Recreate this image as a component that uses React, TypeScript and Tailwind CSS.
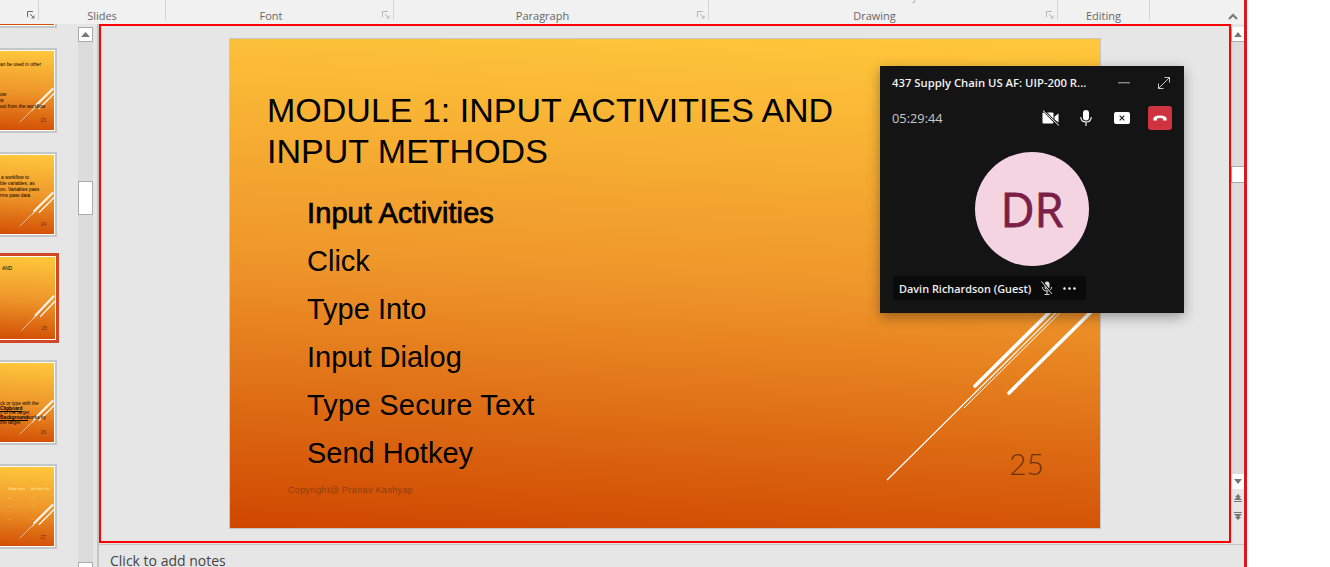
import React from "react";

const sans = "font-['Liberation_Sans',Arial,sans-serif]";
const ui = "font-['Open_Sans','Noto_Sans',sans-serif]";
const slideBg = "bg-[linear-gradient(183deg,#ffc83b_0%,#ee952a_50%,#cf4700_100%)]";

function Launcher({ dark }: { dark?: boolean }) {
  const c = dark ? "#6a6a6a" : "#b4b4b4";
  return (
    <svg width="8" height="8" viewBox="0 0 8 8" className="shrink-0">
      <path d="M0.5 6V0.5H6" fill="none" stroke={c} />
      <path d="M3 3L7 7M7 4.5V7H4.5" fill="none" stroke={c} />
    </svg>
  );
}

function RibbonGroup({ w, label, launcher }: { w: string; label: string; launcher?: boolean }) {
  return (
    <div className={`${w} h-[20px] shrink-0 relative flex items-end justify-center border-r border-[#d4d4d4] ${launcher ? "pr-[17px]" : ""}`}>
      <span className="text-[11px] leading-[13px] -mb-[2px] text-[#666]">{label}</span>
      {launcher ? (
        <span className="absolute right-[3px] bottom-[1px] flex">
          <Launcher />
        </span>
      ) : null}
    </div>
  );
}

function Ribbon() {
  return (
    <div className={`h-[24px] shrink-0 bg-[#f1f1f1] flex relative overflow-hidden ${ui}`}>
      <div className="w-[39px] h-[20px] shrink-0 relative border-r border-[#d4d4d4]">
        <span className="absolute right-[3px] bottom-[1px] flex">
          <Launcher dark />
        </span>
      </div>
      <div className="w-[127px] h-[20px] shrink-0 relative flex items-end justify-center border-r border-[#d4d4d4]">
        <span className="absolute -top-[12px] left-[8px] text-[12px] leading-[16px] text-[#333]">Slide</span>
        <span className="text-[11px] leading-[13px] -mb-[2px] text-[#666]">Slides</span>
      </div>
      <RibbonGroup w="w-[228px]" label="Font" launcher />
      <RibbonGroup w="w-[315px]" label="Paragraph" launcher />
      <div className="w-[349px] h-[20px] shrink-0 relative flex items-end justify-center border-r border-[#d4d4d4] pr-[17px]">
        <span className="absolute -top-[11px] left-[193px] text-[11px] leading-[14px] text-[#aaa]">Styles</span>
        <span className="text-[11px] leading-[13px] -mb-[2px] text-[#666]">Drawing</span>
        <span className="absolute right-[3px] bottom-[1px] flex">
          <Launcher />
        </span>
      </div>
      <RibbonGroup w="w-[92px]" label="Editing" />
      <div className="flex-1 flex justify-end items-start pr-[6px] pt-[13px]">
        <svg width="10" height="7" viewBox="0 0 10 7">
          <path d="M1 6L5 2L9 6" fill="none" stroke="#777" strokeWidth="2" />
        </svg>
      </div>
    </div>
  );
}

function Lines({ thin }: { thin?: boolean }) {
  // Drawn in the coordinates of the full slide (870 x 489).
  return (
    <svg className="absolute inset-0 w-full h-full" viewBox="0 0 870 489" preserveAspectRatio="none">
      <path d="M657 441L860 240" stroke="#fff" strokeWidth={thin ? 3.5 : 1.2} fill="none" />
      <path d="M745 347L860 233" stroke="#fff" strokeWidth={thin ? 9 : 3.6} fill="none" strokeLinecap="round" />
      <path d="M734 369L870 234" stroke="#fff" strokeWidth={thin ? 4 : 1} fill="none" />
      <path d="M779 354L870 264" stroke="#fff" strokeWidth={thin ? 8 : 3.6} fill="none" strokeLinecap="round" />
    </svg>
  );
}

type Row = { t: string; c: string };

function Thumb({ h, rows, num, selected, numTop }: { h: string; rows: Row[]; num: string; selected?: boolean; numTop: string }) {
  return (
    <div
      className={
        selected
          ? `w-[146px] ${h} shrink-0 border-[3px] border-[#d24726] p-px bg-white -mr-[2px]`
          : `w-[146px] ${h} shrink-0 border-2 border-[#c6c6c6] p-px bg-white`
      }
    >
      <div className={`relative w-full h-full overflow-hidden ${slideBg} ${sans}`}>
        <Lines thin />
        {rows.map((r) => (
          <div key={r.t + r.c} className={`absolute whitespace-nowrap leading-[6px] ${r.c}`}>
            {r.t}
          </div>
        ))}
        <div className={`absolute right-[8px] text-[5px] leading-[6px] text-[#6b3408] ${numTop}`}>{num}</div>
      </div>
    </div>
  );
}

function Scrollbar({ thumbTop, thumbH }: { thumbTop: string; thumbH: string }) {
  return (
    <div className="w-full h-full bg-[#dcdcdc] flex flex-col">
      <button className="h-[15px] w-full shrink-0 bg-white border border-[#ababab] flex items-center justify-center">
        <svg width="9" height="5" viewBox="0 0 9 5">
          <path d="M4.5 0L9 5H0Z" fill="#777" />
        </svg>
      </button>
      <div className={`${thumbTop} ${thumbH} w-full shrink-0 bg-white border border-[#ababab]`} />
    </div>
  );
}

function ThumbPanel() {
  return (
    <div className="w-[99px] shrink-0 h-full flex border-r-2 border-[#c6c6c6] bg-[#e6e6e6]">
      <div className="w-[78px] shrink-0 h-full overflow-hidden flex flex-col items-end pr-[21px]">
        <div className="-mt-[81px] mb-[20px] w-[146px] h-[85px] shrink-0 border-2 border-[#c6c6c6] p-px bg-white">
          <div className={`w-full h-full ${slideBg}`} />
        </div>
        <Thumb
          h="h-[85px]"
          num="23"
          numTop="top-[66px]"
          rows={[
            { t: "an be used in other", c: "left-[86px] top-[11px] text-black text-[4.8px]" },
            { t: "ow", c: "left-[86px] top-[41px] text-black text-[4.8px]" },
            { t: "w", c: "left-[86px] top-[47px] text-black text-[4.8px]" },
            { t: "ect from the workflow", c: "left-[86px] top-[53px] text-black text-[4.8px]" },
          ]}
        />
        <div className="h-[19px] shrink-0" />
        <Thumb
          h="h-[85px]"
          num="24"
          numTop="top-[66px]"
          rows={[
            { t: "a workflow to", c: "left-[87px] top-[20px] text-black text-[4.8px]" },
            { t: "ble variables, as", c: "left-[86px] top-[26px] text-black text-[4.8px]" },
            { t: "on. Variables pass", c: "left-[86px] top-[32px] text-black text-[4.8px]" },
            { t: "rms pass data", c: "left-[86px] top-[38px] text-black text-[4.8px]" },
          ]}
        />
        <div className="h-[16px] shrink-0" />
        <Thumb
          selected
          h="h-[90px]"
          num="25"
          numTop="top-[68px]"
          rows={[{ t: "AND", c: "left-[85px] top-[9px] text-black text-[4.8px]" }]}
        />
        <div className="h-[17px] shrink-0" />
        <Thumb
          h="h-[85px]"
          num="26"
          numTop="top-[66px]"
          rows={[
            { t: "ck or type with the", c: "left-[86px] top-[38px] text-black text-[4.8px]" },
            { t: "Clipboard", c: "left-[86px] top-[43px] text-black text-[4.8px] font-bold underline" },
            { t: "y of the target", c: "left-[86px] top-[47px] text-black text-[4.8px]" },
            { t: "Background", c: "left-[86px] top-[52px] text-black text-[4.8px] font-bold underline" },
            { t: "works by", c: "left-[113px] top-[52px] text-black text-[4.8px]" },
            { t: "the target", c: "left-[86px] top-[57px] text-black text-[4.8px]" },
          ]}
        />
        <div className="h-[19px] shrink-0" />
        <Thumb
          h="h-[85px]"
          num="27"
          numTop="top-[67px]"
          rows={[
            { t: "Value Input", c: "left-[94px] top-[19px] text-[#ffe6b0] text-[3.4px]" },
            { t: "Activities list", c: "left-[117px] top-[19px] text-[#ffe6b0] text-[3.4px]" },
            { t: "---", c: "left-[94px] top-[28px] text-[#ffe6b0] text-[3.4px]" },
            { t: "---", c: "left-[117px] top-[28px] text-[#ffe6b0] text-[3.4px]" },
            { t: "---", c: "left-[94px] top-[36px] text-[#ffe6b0] text-[3.4px]" },
            { t: "---", c: "left-[117px] top-[36px] text-[#ffe6b0] text-[3.4px]" },
            { t: "--", c: "left-[94px] top-[49px] text-[#ffe6b0] text-[3.4px]" },
            { t: "---", c: "left-[117px] top-[49px] text-[#ffe6b0] text-[3.4px]" },
          ]}
        />
      </div>
      <div className="w-[15px] shrink-0 h-full pt-[3px] relative">
        <Scrollbar thumbTop="mt-[139px]" thumbH="h-[34px]" />
        <div className="absolute left-0 right-0 bottom-0 h-[5px] bg-white border border-b-0 border-[#ababab]" />
      </div>
    </div>
  );
}

function TeamsWindow() {
  return (
    <div className={`absolute left-[650px] top-[27px] w-[304px] h-[247px] bg-[#141414] shadow-[0_4px_12px_rgba(0,0,0,0.35)] flex flex-col ${ui}`}>
      <div className="h-[32px] shrink-0 flex items-center pl-[12px] pr-[14px] mt-[1px]">
        <span className="text-[11.3px] font-semibold text-[#f2f2f2] whitespace-nowrap">437 Supply Chain US AF: UIP-200 R...</span>
        <svg className="ml-auto" width="12" height="2" viewBox="0 0 12 2">
          <rect width="12" height="1.4" fill="#8a8a8a" />
        </svg>
        <svg className="ml-[28px]" width="12" height="12" viewBox="0 0 12 12">
          <path d="M0.5 11.5L11.5 0.5M6.5 0.5H11.5V5.5M0.5 6.5V11.5H5.5" fill="none" stroke="#c8c8c8" />
        </svg>
      </div>
      <div className="h-[24px] shrink-0 mt-[7px] flex items-center pl-[12px] pr-[12px]">
        <span className="text-[12.8px] text-[#c8c8c8] pt-px">05:29:44</span>
        <svg className="ml-auto" width="18" height="16" viewBox="0 0 18 16">
          <path d="M0.5 3.5Q0.5 2.5 1.5 2.5H10.5Q11.5 2.5 11.5 3.5V12.5Q11.5 13.5 10.5 13.5H1.5Q0.5 13.5 0.5 12.5Z" fill="#fff" />
          <path d="M12.5 6.5L16.5 3.5V12.5L12.5 9.5Z" fill="#fff" />
          <path d="M1.5 0.5L16.5 15.5" stroke="#141414" strokeWidth="2.4" />
          <path d="M1 0.5L17 15.5" stroke="#fff" strokeWidth="1" />
        </svg>
        <svg className="ml-[20px]" width="12" height="16" viewBox="0 0 12 16">
          <rect x="3" y="0" width="6" height="10.5" rx="3" fill="#fff" />
          <path d="M0.8 7Q0.8 12 6 12Q11.2 12 11.2 7M6 12V16" fill="none" stroke="#fff" strokeWidth="1.1" />
        </svg>
        <svg className="ml-[22px]" width="16" height="12" viewBox="0 0 16 12">
          <rect width="16" height="12" rx="2" fill="#fff" />
          <path d="M5.7 3.7L10.3 8.3M10.3 3.7L5.7 8.3" stroke="#141414" strokeWidth="1.1" />
        </svg>
        <div className="ml-[18px] w-[24px] h-[24px] rounded-[3px] bg-[#cf3340] flex items-center justify-center">
          <svg width="14" height="6" viewBox="0 0 14 6">
            <path d="M0.3 4Q0.3 0.5 7 0.5Q13.7 0.5 13.7 4V5.4H10V3.4Q7 2.6 4 3.4V5.4H0.3Z" fill="#fff" />
          </svg>
        </div>
      </div>
      <div className="flex justify-center mt-[22px] shrink-0">
        <div className="w-[114px] h-[114px] rounded-full bg-[#f4d4e1] flex items-center justify-center text-[47px] font-normal [-webkit-text-stroke:0.8px_#7b1f49] text-[#7b1f49] leading-none">DR</div>
      </div>
      <div className="mt-[10px] ml-[13px] w-[193px] h-[24px] rounded-[3px] bg-[#0a0a0a] flex items-center pl-[6px] pt-[2px]">
        <span className="text-[10.9px] font-semibold text-[#eeeeee] whitespace-nowrap">Davin Richardson (Guest)</span>
        <svg className="ml-[10px] -mt-[2px]" width="12" height="14" viewBox="0 0 12 14">
          <rect x="3.5" y="0.5" width="5" height="8" rx="2.5" fill="#ddd" />
          <path d="M1.5 6Q1.5 10 6 10Q10.5 10 10.5 6M6 10V13.5M3.5 13.5H8.5" fill="none" stroke="#ddd" />
          <path d="M1 0.5L11.5 13" stroke="#0a0a0a" strokeWidth="2" />
          <path d="M0.5 0.5L11 13" stroke="#ddd" />
        </svg>
        <svg className="ml-[10px] -mt-[2px]" width="13" height="3" viewBox="0 0 13 3">
          <circle cx="1.5" cy="1.5" r="1.2" fill="#fff" />
          <circle cx="6.5" cy="1.5" r="1.2" fill="#fff" />
          <circle cx="11.5" cy="1.5" r="1.2" fill="#fff" />
        </svg>
      </div>
    </div>
  );
}

function Slide() {
  const items = [
    { t: "Click", c: "" },
    { t: "Type Into", c: "" },
    { t: "Input Dialog", c: "" },
    { t: "Type Secure Text", c: "tracking-[0.25px]" },
    { t: "Send Hotkey", c: "" },
  ];
  return (
    <div className={`relative w-[872px] h-[491px] shrink-0 border border-[#c6c6c6] ${slideBg} pl-[37px] pt-[51px] ${sans}`}>
      <Lines />
      <h1 className="relative text-[34px] leading-[41px] text-black w-[600px] font-normal">
        MODULE 1: INPUT ACTIVITIES AND
        <br />
        INPUT METHODS
      </h1>
      <ul className="relative mt-[18px] ml-[40px] text-[29px] leading-[47.9px] text-black">
        <li className="[-webkit-text-stroke:0.7px_black] tracking-[0.1px]">Input Activities</li>
        {items.map((i) => (
          <li key={i.t} className={i.c}>
            {i.t}
          </li>
        ))}
      </ul>
      <div className="absolute left-[58px] top-[445px] text-[9px] leading-[12px] tracking-[0.36px] text-[#8a3f0c]">Copyright@ Pranav Kashyap</div>
      <div className="absolute left-[779px] top-[406px] text-[30px] leading-[36px] font-light font-['Lato',sans-serif] text-[#6b3208]">25</div>
      <TeamsWindow />
    </div>
  );
}

function MainScrollbar() {
  return (
    <div className="w-[13px] shrink-0 h-full pt-[3px] flex flex-col bg-[#e6e6e6]">
      <div className="flex-1 bg-[#dcdcdc] flex flex-col justify-between min-h-0">
        <div className="flex flex-col">
          <button className="h-[15px] w-full bg-white border-l border-b border-[#ababab] flex items-center justify-center">
            <svg width="8" height="5" viewBox="0 0 8 5">
              <path d="M4 0L8 5H0Z" fill="#777" />
            </svg>
          </button>
          <div className="mt-[124px] h-[17px] w-full bg-white border border-r-0 border-[#ababab]" />
        </div>
        <button className="h-[15px] w-full bg-white border-l border-[#dcdcdc] flex items-center justify-center">
          <svg width="8" height="5" viewBox="0 0 8 5">
            <path d="M4 5L8 0H0Z" fill="#777" />
          </svg>
        </button>
      </div>
      <div className="h-[54px] shrink-0 flex flex-col items-center pt-[5px] gap-[10px]">
        <svg width="8" height="8" viewBox="0 0 8 8">
          <path d="M4 0L7 3H1Z M4 2L8 6H0Z M0 7H8V8H0Z" fill="#777" />
        </svg>
        <svg width="8" height="8" viewBox="0 0 8 8">
          <path d="M0 0H8V1H0Z M0 2H8L4 6Z M1 5H7L4 8Z" fill="#777" />
        </svg>
      </div>
    </div>
  );
}

export default function App() {
  return (
    <div className="w-[1330px] h-[567px] flex overflow-hidden bg-white">
      <div className="w-[1244px] h-full shrink-0 flex flex-col bg-[#e6e6e6]">
        <Ribbon />
        <div className="flex-1 flex min-h-0">
          <ThumbPanel />
          <div className="flex-1 flex flex-col min-w-0">
            <div className="h-[519px] shrink-0 flex">
              <div className="w-[1132px] shrink-0 h-full border-2 border-[#ff0000] bg-[#e6e6e6] flex items-center justify-center">
                <Slide />
              </div>
              <div className="flex-1 h-full flex flex-col">
                <MainScrollbar />
              </div>
            </div>
            <div className={`mt-[1px] border-t border-[#c6c6c6] pl-[11px] pt-[7px] text-[14px] leading-[18px] text-[#444] ${ui}`}>Click to add notes</div>
          </div>
        </div>
      </div>
      <div className="w-[3px] h-full shrink-0 bg-[#e0141f]" />
    </div>
  );
}
